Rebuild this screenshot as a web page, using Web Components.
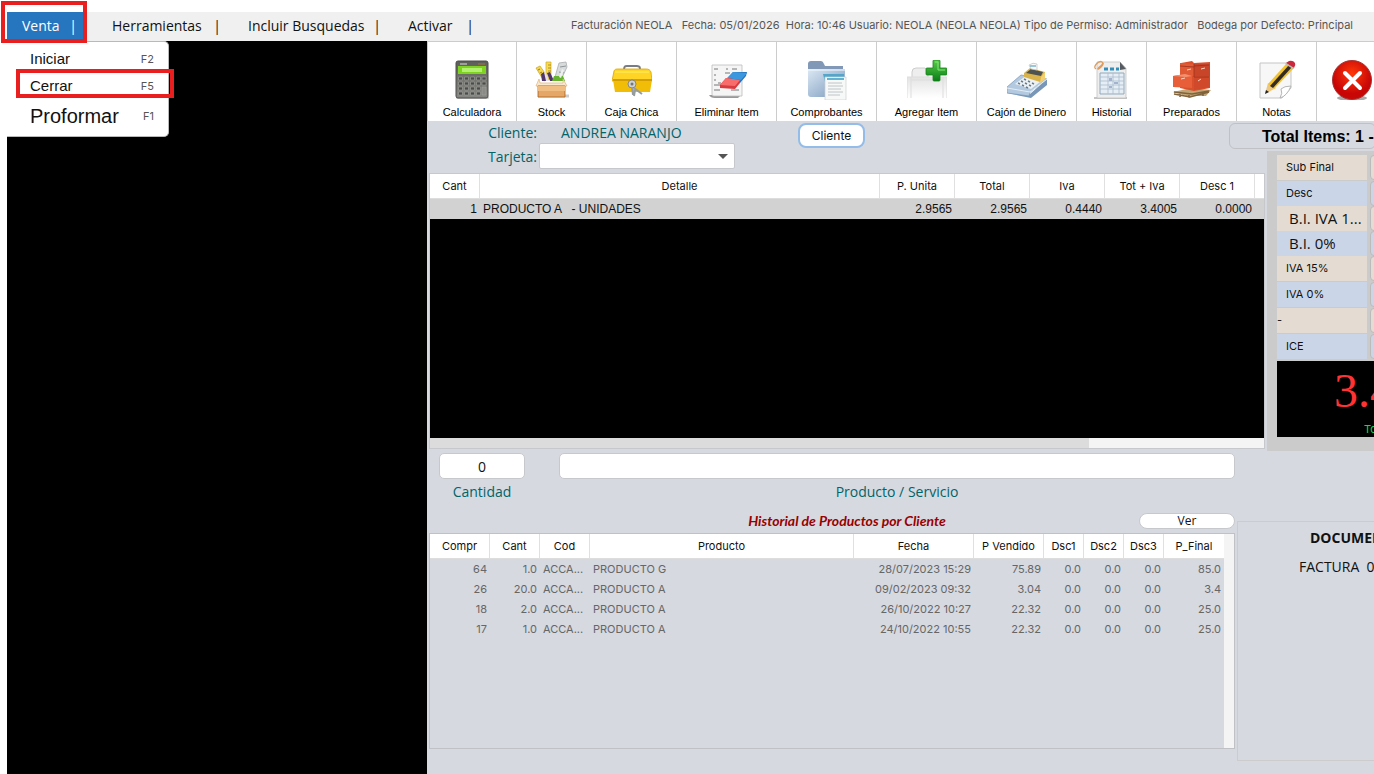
<!DOCTYPE html>
<html lang="es">
<head>
<meta charset="utf-8">
<title>Facturación NEOLA</title>
<style>
  :root {
    --panel: #d6d9e0;
    --line: #c6c8cb;
    --teal: #006468;
    --ui: Inter, "Noto Sans", sans-serif;
    --hand: "Comic Sans MS", "Open Sans", sans-serif;
    --arial: "Liberation Sans", Arial, sans-serif;
  }
  body { margin: 0; background: #fff; overflow: hidden; }
</style>
</head>
<body>
<pos-app></pos-app>

<script>
const define = (name, html, init) => {
  const template = document.createElement('template');
  template.innerHTML = html;
  customElements.define(name, class extends HTMLElement {
    constructor() {
      super();
      this.attachShadow({ mode: 'open' }).append(template.content.cloneNode(true));
    }
    connectedCallback() { if (init) init(this, this.shadowRoot); }
  });
};

const icons = {
  calc: `<defs><linearGradient id="a" x2="0" y2="1"><stop stop-color="#5d5d5a"/><stop offset="1" stop-color="#868682"/></linearGradient></defs>
    <rect x="4" y="36" width="33" height="3" rx="1.500" fill="#ccc"/>
    <rect x="4" y="1" width="32" height="37" rx="2" fill="url(#a)" stroke="#4c4c4a"/>
    <path d="M8 4h7" stroke="#ddd"/><path d="M26 4h7" stroke="#a0783c"/>
    <rect x="6" y="6" width="28" height="8" fill="#7ed320"/><rect x="10" y="8" width="20" height="4" fill="#b2f070"/>
    <g fill="#4b4c4a" stroke="#a3a4a0" stroke-width=".6"><path d="M6.500 17h4v3h-4zM12.500 17h4v3h-4zM18.500 17h4v3h-4zM24.500 17h4v3h-4zM30 17h4v3h-4zM6.500 22h4v3h-4zM12.500 22h4v3h-4zM18.500 22h4v3h-4zM24.500 22h4v3h-4zM30 22h4v3h-4zM6.500 27h4v3h-4zM12.500 27h4v3h-4zM18.500 27h4v3h-4zM24.500 27h4v3h-4zM6.500 32h4v3h-4zM12.500 32h4v3h-4zM18.500 32h4v3h-4zM24.500 32h4v3h-4z"/><path fill="#8a8a87" d="M30 27h4v8h-4z"/></g>`,
  stock: `<path d="m4 8 4-2 9 13-5 2z" fill="#f4d755" stroke="#c9a21e" stroke-width=".7"/><path d="m6 10 2-1m0 4 2-1m0 4 2-1" stroke="#a27d10"/>
    <path d="M14 2h5v17h-5z" fill="#f7db55" stroke="#d0a927" stroke-width=".7"/><path d="M16 5h3m-3 3h3m-3 3h3" stroke="#a27d10" stroke-width=".8"/>
    <path d="m27 3 7-1 1 5-6 13-6-3z" fill="#d9dcdd" stroke="#a8adaf" stroke-width=".8"/><path d="m28 7 6-1m-7 6 5 1" stroke="#8f9597"/>
    <path d="m9 14 3-2 4 9h-6zM15 13l3-1 4 9h-4z" fill="#503569"/><path d="m12 12 2 1 3 8h-3z" fill="#e6dff0"/>
    <path d="M22 16h9l2 5H20z" fill="#65b32e"/><path d="m30 9 2 1-3 8-2-1z" fill="#eef0f0"/>
    <path d="M6 36h31" stroke="#ccc" stroke-width="3"/><path d="m7 19-3 7h31l-4-7v4H8z" fill="#fae8cd" stroke="#dcb27a" stroke-width=".7"/>
    <path d="M6 26h27v11H6z" fill="#e4a768" stroke="#a8611e" stroke-width=".8"/><path d="M6 26h27v5H6z" fill="#f0bd82"/>`,
  cash: `<path d="M12 11c0-5 1-5 3-5h10c3 0 3 1 3 5" fill="none" stroke="#777c86" stroke-width="2"/><path d="M14 11h13" stroke="#ebb800" stroke-width="3"/>
    <path d="M2 11c1-2 2-2 4-2h28c3 0 4 1 5 3l1 9H0z" fill="#ffd424" stroke="#d8a408" stroke-width=".8"/><path d="M1 20h39l-2 12H3z" fill="#f1bd06"/><path d="M1 19h39v2H1z" fill="#d29d05"/><path d="M3 12h34" stroke="#fff16e"/>
    <circle cx="20" cy="24" r="4" fill="#cdd1d2" stroke="#777" stroke-width=".8"/><circle cx="20" cy="24" r="1.500" fill="#777"/><path d="m20 27 1 8m1-7 8 6m-7-4-1 6" fill="none" stroke="#969c9e" stroke-width="2"/>`,
  erase: `<path d="M2 35h32l-3 3H8c-3 0-5-1-6-3z" fill="#999"/><path d="M5 5h30v31H7c-2 0-2-1-2-3z" fill="#f5f5f5" stroke="#bbb" stroke-width=".8"/>
    <path d="M7 9h4m8 0h2m4 0h5M7 15h2m9-2h5M7 20h2m2 3h3M7 25h8m-8 5h6m11 0h8" stroke="#777" stroke-width="1"/>
    <path d="M26 12h14l-1 4-6 7-13-4z" fill="#2475bd"/><path d="m26 12 14 1-6 7-14-2z" fill="#3b98de"/><path d="m19 18 14 2v3l-5 6-15-1v-3z" fill="#d93a3f"/><path d="m19 18 14 2-5 6-15-1z" fill="#f86d6c"/>`,
  folder: `<defs><linearGradient id="a" x2="1" y2="1"><stop stop-color="#dce8f4"/><stop offset="1" stop-color="#7697bb"/></linearGradient></defs>
    <path d="M1 4q0-3 3-3h10q2 0 3 3l1 2h18v13H1z" fill="#8198b7"/><path d="M1 9h37v25q0 3-3 3H4q-3 0-3-3z" fill="url(#a)"/><path d="M1 10h37" stroke="#f5faff"/>
    <path d="M16 14h21v8H18z" fill="#54a5ca"/><path d="M18 17h21v23H18z" fill="#f7f8f8" stroke="#ccd0d1" stroke-width=".7"/><path d="M20 19h17" stroke="#60b4d1" stroke-width="2"/><path d="M21 23h14m-14 3h15m-15 3h13m-13 3h15m-15 3h12" stroke="#b2b8ba" stroke-width=".8"/>`,
  add: `<defs><linearGradient id="a" x2="0" y2="1"><stop stop-color="#e3e3e3"/><stop offset="1" stop-color="#fff"/></linearGradient><linearGradient id="b" x2="0" y2="1"><stop stop-color="#5bce4b"/><stop offset="1" stop-color="#087c16"/></linearGradient></defs>
    <path d="M5 18v-6q0-4 4-4h9l3 3v7" fill="#eee" stroke="#ccc"/><path d="M0 17h40v21H0z" fill="url(#a)"/><path d="M0 38V17h40v21M4 17v21m32-21v21M4 20h32" fill="none" stroke="#ddd"/>
    <path d="M26 1q0-1 1-1h5q1 0 1 1v7h6q1 0 1 1v5q0 1-1 1h-6v5q0 1-1 1h-5q-1 0-1-1v-5h-6q-1 0-1-1V9q0-1 1-1h6z" fill="url(#b)" stroke="#17801b" stroke-width=".8"/><path d="M28 2h3v8h7" fill="none" stroke="#85e576"/>`,
  till: `<path d="m0 30 23 4 17-15v6L24 38 0 33z" fill="#7897b8"/><path d="M0 27 14 15l26 4-17 13-1 4-22-3z" fill="#b2c9df" stroke="#789abb" stroke-width=".7"/><path d="m0 28 23 4 17-13" fill="none" stroke="#e3edf5"/>
    <path d="m8 24 12-9 18 3-14 11z" fill="#edf1f4"/><path d="m17 13 6-5 15 4v6l-5 4-16-5z" fill="#d9b44c"/><path d="m19 13 5-4 12 3-2 4z" fill="#4c5350"/><path d="m34 17 4-5v7l-5 4z" fill="#f3cf70"/>
    <path d="M22 5q4-3 8-1v6l-6-1z" fill="#fafafa" stroke="#b9bdc0" stroke-width=".7"/><path d="M23 6h6" stroke="#3a93bb"/>
    <path d="m11 23 2 1m1-3 2 1m1-3 2 1m-4 5 2 1m1-3 2 1m1-3 2 1m-4 5 2 1m1-3 2 1m1-3 2 1" stroke="#647e90" stroke-width="1.500"/>`,
  history: `<path d="M2 38h33" stroke="#c5c5c5" stroke-width="2"/><path d="M5 2h23l6 6v30H5z" fill="#eee" stroke="#bbb" stroke-width=".7"/><path d="m28 2 6 7-6 1z" fill="#555b60"/>
    <path d="M4 9C0 7 7 0 10 2S5 8 6 9s8-7 4-6" fill="none" stroke="#df9c5a" stroke-width="1.300"/><path d="M12 9h4m2 0h4m2 0h3" stroke="#328fbc" stroke-width="3"/>
    <path d="M8 13h24v21H8z" fill="#e5edf5" stroke="#91a9bd"/><path d="M8 17h24M8 21h24M8 25h24M8 29h24M16 13v21m5-21v21m6-21v21" stroke="#a9bccb" stroke-width=".8"/><path d="M17 18h3v3h-3m5 1h4v2h-4m-5 2h3v2h-3" fill="#a5b2ce"/>`,
  boxes: `<path d="m1 32 18-4 20 2-5 6H14z" fill="#c1a475"/><path d="m2 32 18 2 17-3M2 34l16 3 19-5M8 34v3m9-2v3m14-6v4" fill="none" stroke="#80633b" stroke-width="1.500"/>
    <path d="M8 4q0-1 1-1l11-2 2 2 16-1v26l-16 3-14-3z" fill="#d94f2c"/><path d="M22 4h16v12H22z" fill="#c94529"/><path d="m8 3 14 1v12H8z" fill="#e05a36"/><path d="m22 17 16-1v11l-16 3z" fill="#cf492a"/><path d="m1 16 12-2 7 2v12l-19-1z" fill="#e75e38"/><path d="m1 16 13 1 6-1-7-2z" fill="#f29170"/><path d="M22 4v13m0 0h15M8 6l14 1m0-1 15-1" stroke="#9c301b" stroke-width=".8"/><path d="m9 19 4-1m13 3 3-2m-14-9 4-1m10 0 4-1" stroke="#ffd3bf"/>`,
  note: `<path d="M3 3h31v25l-9 10H3z" fill="#f7f7f7" stroke="#c5c5c5"/><path d="M34 26q-7 0-10 3 2 4-1 9 7-2 11-12z" fill="#fff" stroke="#b5b5b5"/>
    <path d="m8 34 3-11 8 5z" fill="#edc77e"/><path d="m8 34 1-4 3 2z" fill="#222"/><path d="M11 24 30 3l7 5-20 21z" fill="#f3c32e"/><path d="M13 26 32 5l3 2-19 21z" fill="#332c22"/><path d="m29 3 3-2q4-1 6 2 1 2-1 5z" fill="#ca293d"/><path d="m28 4 8 5 1-1-8-5z" fill="#bbb"/>`,
  close: `<defs><radialGradient id="a" cy=".35"><stop stop-color="#ff3a08"/><stop offset="1" stop-color="#c80606"/></radialGradient></defs><ellipse cx="20" cy="38" rx="15" ry="3" fill="#aaa"/><circle cx="20" cy="20" r="19.500" fill="url(#a)" stroke="#a33636"/><path d="m13 13 15 15m0-15L13 28" stroke="#fff" stroke-width="4" stroke-linecap="round"/>`
};

define('pos-menu-item', `
<style>
  :host { display: block; }
  button { all: unset; box-sizing: border-box; display: flex; width: 100%; height: 29px; padding: 0 12px 2px 15px; align-items: center; justify-content: space-between; font: 14px var(--hand); color: #111; white-space: pre; }
  :host([active]) button { background: #2675bf; color: #fff; padding-right: 7px; }
</style>
<button type="button"><slot></slot><span aria-hidden="true">|</span></button>`);

define('pos-menu-bar', `
<style>
  :host { display: flex; height: 29px; background: #f0f0f0; align-items: center; overflow: hidden; }
  nav { display: flex; flex: none; }
  .a { width: 77px; margin-right: 13px; } .b { width: 136px; } .c { width: 160px; } .d { width: 93px; }
  p { flex: 1; margin: 0; padding: 0 21px 4px 0; text-align: right; white-space: pre; font: 11px var(--ui); color: #555; }
</style>
<nav><pos-menu-item class="a" active>Venta</pos-menu-item><pos-menu-item class="b">Herramientas</pos-menu-item><pos-menu-item class="c">Incluir Busquedas</pos-menu-item><pos-menu-item class="d">Activar</pos-menu-item></nav>
<p>Facturación NEOLA   Fecha: 05/01/2026  Hora: 10:46 Usuario: NEOLA (NEOLA NEOLA) Tipo de Permiso: Administrador   Bodega por Defecto: Principal</p>`);

define('pos-popup', `
<style>
  :host { display: block; box-sizing: border-box; width: 162px; padding: 3px 0; background: #fff; border: 1px solid #b9b9b9; border-left: 0; border-radius: 0 5px 5px 0; }
  button { all: unset; box-sizing: border-box; display: flex; width: 100%; height: 27px; padding: 0 14px 0 23px; align-items: center; justify-content: space-between; font: 15px var(--arial); color: #111; }
  button.big { height: 34px; font-size: 20px; }
  kbd { font: 11px var(--ui); color: #555; }
</style>
<button type="button">Iniciar<kbd>F2</kbd></button>
<button type="button">Cerrar<kbd>F5</kbd></button>
<button type="button" class="big">Proformar<kbd>F1</kbd></button>`);

define('pos-tool', `
<style>
  :host { display: block; flex: none; box-sizing: border-box; border-right: 1px solid #ccc; }
  button { all: unset; display: flex; width: 100%; height: 79px; flex-direction: column; align-items: center; padding-top: 18px; box-sizing: border-box; font: 11px/15px var(--arial); color: #000; white-space: nowrap; }
  svg { width: 40px; height: 40px; margin-bottom: 5px; }
</style>
<button type="button"><svg viewBox="0 0 40 40" aria-hidden="true"></svg><slot></slot></button>`,
(el, root) => {
  el.style.width = el.getAttribute('width') + 'px';
  root.querySelector('svg').innerHTML = icons[el.getAttribute('icon')];
});

define('pos-toolbar', `
<style>
  :host { display: flex; box-sizing: border-box; height: 80px; background: #fff; border-top: 1px solid #ccc; border-left: 1px solid #ccc; overflow: hidden; }
</style>
<pos-tool icon="calc" width="89">Calculadora</pos-tool>
<pos-tool icon="stock" width="70">Stock</pos-tool>
<pos-tool icon="cash" width="90">Caja Chica</pos-tool>
<pos-tool icon="erase" width="100">Eliminar Item</pos-tool>
<pos-tool icon="folder" width="100">Comprobantes</pos-tool>
<pos-tool icon="add" width="100">Agregar Item</pos-tool>
<pos-tool icon="till" width="100">Cajón de Dinero</pos-tool>
<pos-tool icon="history" width="70">Historial</pos-tool>
<pos-tool icon="boxes" width="90">Preparados</pos-tool>
<pos-tool icon="note" width="80">Notas</pos-tool>
<pos-tool icon="close" width="70"></pos-tool>`);

define('pos-client', `
<style>
  :host { display: grid; grid-template: 22px 26px / 108px 196px 1fr; column-gap: 2px; align-items: center; height: 52px; box-sizing: border-box; font: 14px var(--hand); color: var(--teal); }
  label, .key { text-align: right; }
  .name { padding-left: 22px; }
  button { grid-area: 1 / 3 / 3 / 4; align-self: start; justify-self: start; margin: 2px 0 0 61px; width: 67px; height: 25px; padding: 0; border: 2px solid #93bde8; border-radius: 8px; background: #fff; font: 12px var(--ui); color: #111; }
  .pick { display: grid; }
  select, svg { grid-area: 1 / 1; }
  select { appearance: none; height: 26px; border: 1px solid var(--line); border-radius: 2px; background: #fff; }
  svg { width: 10px; height: 5px; margin-right: 7px; place-self: center end; pointer-events: none; }
</style>
<span class="key">Cliente:</span><span class="name">ANDREA NARANJO</span>
<button type="button">Cliente</button>
<label for="card">Tarjeta:</label>
<div class="pick"><select id="card"><option></option></select><svg viewBox="0 0 10 5"><path d="M0 0h10L5 5z" fill="#555"/></svg></div>`);

/* columns: [title, width or 0 for the elastic one, alignment] */
const tables = {
  sale: {
    cols: [['Cant', 50, 'right'], ['Detalle', 0, 'left'], ['P. Unita', 75, 'right'], ['Total', 75, 'right'], ['Iva', 75, 'right'], ['Tot + Iva', 75, 'right'], ['Desc 1', 75, 'right'], ['', 9, 'left']],
    rows: [['1', 'PRODUCTO A   - UNIDADES', '2.9565', '2.9565', '0.4440', '3.4005', '0.0000', '']]
  },
  history: {
    cols: [['Compr', 60, 'right'], ['Cant', 50, 'right'], ['Cod', 50, 'left'], ['Producto', 0, 'left'], ['Fecha', 120, 'right'], ['P Vendido', 70, 'right'], ['Dsc1', 40, 'right'], ['Dsc2', 40, 'right'], ['Dsc3', 40, 'right'], ['P_Final', 60, 'right']],
    rows: [
      ['64', '1.0', 'ACCA...', 'PRODUCTO G', '28/07/2023 15:29', '75.89', '0.0', '0.0', '0.0', '85.0'],
      ['26', '20.0', 'ACCA...', 'PRODUCTO A', '09/02/2023 09:32', '3.04', '0.0', '0.0', '0.0', '3.4'],
      ['18', '2.0', 'ACCA...', 'PRODUCTO A', '26/10/2022 10:27', '22.32', '0.0', '0.0', '0.0', '25.0'],
      ['17', '1.0', 'ACCA...', 'PRODUCTO A', '24/10/2022 10:55', '22.32', '0.0', '0.0', '0.0', '25.0']
    ]
  }
};
define('pos-table', `
<style>
  :host { display: block; }
  table { width: 100%; table-layout: fixed; border-collapse: separate; border-spacing: 0; font: 11px var(--ui); }
  th { box-sizing: border-box; height: 25px; padding: 0; background: #fff; border-right: 1px solid #e0e0e0; border-bottom: 1px solid #ddd; font-weight: 400; color: #111; }
  th:last-child { border-right: 0; }
  td { height: 20px; padding: 0 3px; color: #666; white-space: pre; }
  :host([kind=sale]) td { background: #d2d2d2; color: #111; font: 12px/20px var(--arial); }
</style>
<table><thead><tr></tr></thead><tbody></tbody></table>`,
(el, root) => {
  const { cols, rows } = tables[el.getAttribute('kind')];
  const head = root.querySelector('thead tr');
  for (const [title, width] of cols) {
    const th = document.createElement('th');
    th.textContent = title;
    if (width) th.style.width = width + 'px';
    head.append(th);
  }
  for (const row of rows) {
    const tr = root.querySelector('tbody').insertRow();
    row.forEach((text, i) => {
      const td = tr.insertCell();
      td.textContent = text;
      td.style.textAlign = cols[i][2];
    });
  }
});

define('pos-sale', `
<style>
  :host { display: flex; flex-direction: column; box-sizing: border-box; height: 276px; border: 1px solid var(--line); background: #000; }
  .track { margin-top: auto; height: 10px; background: #f4f4f4; }
  .thumb { width: 79%; height: 100%; background: #dcdcdc; }
</style>
<pos-table kind="sale"></pos-table><div class="track"><div class="thumb"></div></div>`);

define('pos-totals', `
<style>
  :host { display: block; overflow: hidden; background: #cbcbcb; padding: 4px 0 14px 10px; }
  .row { display: grid; grid-template-columns: 90px 120px; column-gap: 3px; height: 26px; font: 11px/25px var(--ui); color: #111; }
  .row.tight { height: 25px; }
  label { box-sizing: border-box; height: 25px; padding-left: 9px; background: #e4dcd2; white-space: nowrap; }
  .alt label { background: #cad6e8; }
  .hand label { padding-left: 12px; font: 15px/25px var(--hand); }
  .flush label { padding-left: 0; }
  input { box-sizing: border-box; height: 25px; border: 1px solid #bbb; border-radius: 4px; background: #e4dcd2; }
  .alt input { background: #cad6e8; }
  .sum { box-sizing: border-box; height: 76px; margin-top: 1px; padding-left: 57px; background: #000; width: 220px; color: #ff3333; font: 48px/60px "Liberation Serif", serif; }
  small { display: block; padding-left: 30px; font: 11px/16px var(--ui); color: #00e04a; }
</style>
<div class="row"><label for="a">Sub Final</label><input id="a"></div>
<div class="row alt tight"><label for="b">Desc</label><input id="b"></div>
<div class="row hand tight"><label for="c">B.I. IVA 1...</label><input id="c"></div>
<div class="row alt hand tight"><label for="d">B.I. 0%</label><input id="d"></div>
<div class="row"><label for="e">IVA 15%</label><input id="e"></div>
<div class="row alt"><label for="f">IVA 0%</label><input id="f"></div>
<div class="row flush"><label for="g">-</label><input id="g"></div>
<div class="row alt"><label for="h">ICE</label><input id="h"></div>
<div class="sum">3.40<small>Total</small></div>`);

define('pos-entry', `
<style>
  :host { display: grid; grid-template-columns: 86px 1fr; column-gap: 34px; padding: 0 0 0 10px; text-align: center; font: 14px/20px var(--hand); color: var(--teal); }
  input { box-sizing: border-box; width: 100%; height: 26px; border: 1px solid var(--line); border-radius: 5px; background: #fff; padding: 0 4px; text-align: center; font: 14px var(--hand); color: #111; }
  label { padding-top: 3px; }
</style>
<input id="qty" value="0"><input id="item">
<label for="qty">Cantidad</label><label for="item">Producto / Servicio</label>`);

define('pos-history', `
<style>
  :host { display: flex; flex-direction: column; }
  header { display: grid; grid-template-columns: 1fr 96px; align-items: center; height: 16px; margin-bottom: 4px; }
  h2 { margin: 0; padding-left: 126px; text-align: center; font: italic 700 14px/16px Lato, sans-serif; color: #900; }
  button { box-sizing: border-box; height: 16px; padding: 0; border: 1px solid var(--line); border-radius: 8px; background: #fff; font: 12px/14px var(--hand); color: #111; }
  .box { display: flex; flex: 1; border: 1px solid #bfc1c4; }
  pos-table { flex: 1; }
  .bar { width: 10px; background: #f4f4f4; }
</style>
<header><h2>Historial de Productos por Cliente</h2><button type="button">Ver</button></header>
<div class="box"><pos-table kind="history"></pos-table><div class="bar"></div></div>`);

define('pos-document', `
<style>
  :host { display: block; box-sizing: border-box; border: 1px solid #ccc; border-right: 0; padding: 6px 0 0 61px; overflow: hidden; color: #111; font: 14px/20px var(--hand); }
  h2 { margin: 0 0 9px 11px; font: 700 14px/20px var(--hand); }
  p { margin: 0; white-space: pre; }
</style>
<h2>DOCUMENTO</h2><p>FACTURA  001</p>`);

define('pos-app', `
<style>
  :host { display: flex; flex-direction: column; box-sizing: border-box; min-height: 100vh; padding: 12px 0 0 7px; position: relative; }
  .body { flex: 1; display: grid; grid-template-columns: 420px minmax(0, 1fr); background: #000; }
  main { display: flex; flex-direction: column; background: var(--panel); min-width: 0; }
  .top { display: grid; grid-template-columns: minmax(0, 1fr) 107px; }
  .sale { padding: 0 2px; }
  .count { box-sizing: border-box; height: 26px; margin: 2px -2px 2px -38px; padding-left: 32px; border: 1px solid #bfc1c4; border-radius: 6px; background: var(--panel); font: 700 16px/26px var(--arial); color: #000; white-space: nowrap; }
  .side { min-width: 0; }
  .low { flex: 1; display: grid; grid-template-columns: minmax(0, 1fr) 137px; column-gap: 2px; padding-left: 2px; }
  .left { display: flex; flex-direction: column; padding: 2px 0 25px; gap: 11px; }
  pos-history { flex: 1; }
  pos-document { margin: 70px 0 13px; }
  pos-popup { position: absolute; left: 7px; top: 41px; }
  .mark { position: absolute; box-sizing: border-box; border: 4px solid #e81e1f; pointer-events: none; }
  .m1 { left: 1px; top: 1px; width: 86px; height: 42px; }
  .m2 { left: 16px; top: 69px; width: 158px; height: 29px; }
</style>
<pos-menu-bar></pos-menu-bar>
<div class="body">
  <div></div>
  <main>
    <pos-toolbar></pos-toolbar>
    <div class="top">
      <div class="sale"><pos-client></pos-client><pos-sale></pos-sale></div>
      <div class="side"><div class="count">Total Items: 1 -</div><pos-totals></pos-totals></div>
    </div>
    <div class="low">
      <div class="left"><pos-entry></pos-entry><pos-history></pos-history></div>
      <pos-document></pos-document>
    </div>
  </main>
</div>
<pos-popup></pos-popup>
<div class="mark m1"></div><div class="mark m2"></div>`);
</script>
</body>
</html>
